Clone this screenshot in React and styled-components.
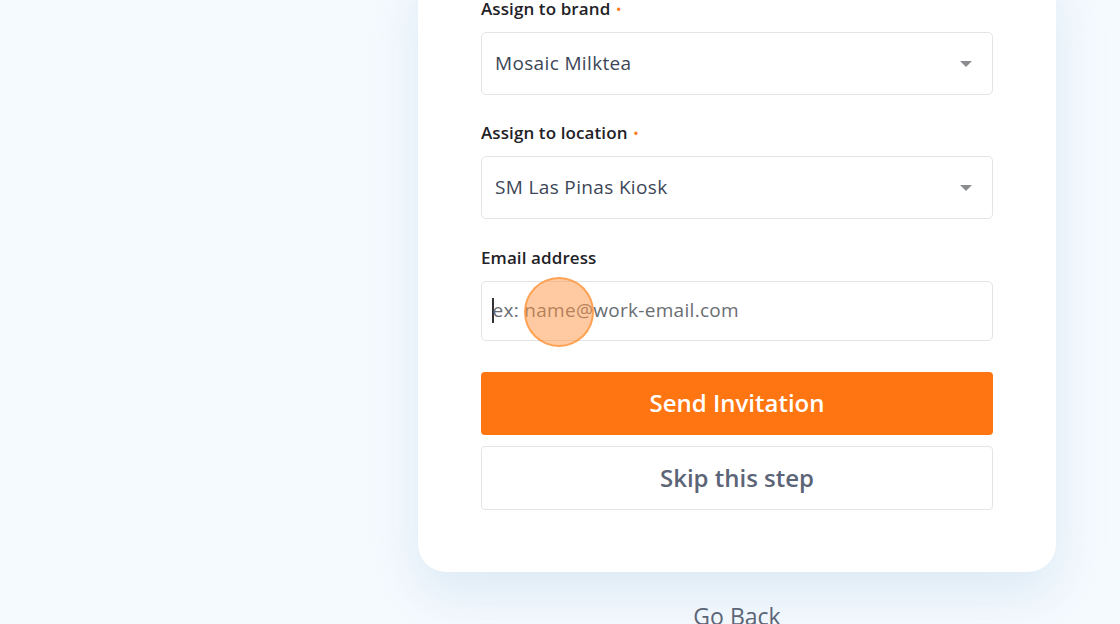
import React from "react";
import styled, { createGlobalStyle } from "styled-components";

const Global = createGlobalStyle`
  html, body { margin: 0; padding: 0; }
  body {
    background: #f5fafe;
    font-family: "Open Sans", "Noto Sans", sans-serif;
    overflow: hidden;
  }
`;

const Page = styled.div`
  width: 1120px;
  height: 624px;
  overflow: hidden;
  display: flex;
  flex-direction: column;
  align-items: flex-start;
  padding-left: 418px;
  box-sizing: border-box;
  background: #f5fafe;
`;

const Column = styled.div`
  width: 638px;
  display: flex;
  flex-direction: column;
  align-items: center;
`;

const Card = styled.div`
  width: 100%;
  box-sizing: border-box;
  margin-top: -40px;
  padding: 38px 63px 62px;
  background: #ffffff;
  border-radius: 28px;
  box-shadow: 0 22px 50px rgba(190, 214, 234, 0.45);
  display: flex;
  flex-direction: column;
`;

const Field = styled.div`
  display: flex;
  flex-direction: column;
  gap: 12px;
  margin-bottom: ${(p) => p.$after}px;
`;

const Label = styled.div`
  font-size: 17px;
  line-height: 22px;
  font-weight: 600;
  color: #1f2227;
  letter-spacing: 0.1px;
`;

const Dot = styled.span`
  color: #ff7a1a;
  font-size: 13px;
  margin-left: 6px;
  vertical-align: 1px;
`;

const Select = styled.div`
  height: 63px;
  box-sizing: border-box;
  border: 1px solid #e2e4e8;
  border-radius: 5px;
  display: flex;
  align-items: center;
  justify-content: space-between;
  padding: 0 20px 2px 13px;
  font-size: 19px;
  letter-spacing: 0.35px;
  color: #3c4657;
`;

const Caret = styled.span`
  width: 0;
  height: 0;
  border-left: 6px solid transparent;
  border-right: 6px solid transparent;
  border-top: 6px solid #8a8c90;
  margin-top: 2px;
`;

const InputBox = styled.div`
  position: relative;
  height: 60px;
  box-sizing: border-box;
  border: 1px solid #e2e4e8;
  border-radius: 5px;
  display: flex;
  align-items: center;
  padding: 0 10px 2px;
  font-size: 19px;
  letter-spacing: 0.3px;
  color: #6a6d72;
`;

const CaretLine = styled.span`
  width: 1.5px;
  height: 25px;
  background: #333;
`;

const Placeholder = styled.span`
  margin-left: -1px;
`;

const ClickMark = styled.span`
  position: absolute;
  left: 42px;
  top: -5px;
  width: 70px;
  height: 70px;
  border-radius: 50%;
  background: rgba(255, 150, 70, 0.5);
  border: 2px solid rgba(255, 145, 50, 0.7);
  box-sizing: border-box;
`;

const Button = styled.div`
  height: ${(p) => p.$h}px;
  box-sizing: border-box;
  border-radius: 4px;
  display: flex;
  align-items: center;
  justify-content: center;
  font-size: 24px;
  font-weight: 600;
  padding-bottom: 2px;
  margin-bottom: ${(p) => p.$after || 0}px;
  background: ${(p) => (p.$primary ? "#ff7512" : "#ffffff")};
  color: ${(p) => (p.$primary ? "#ffffff" : "#5c6577")};
  border: ${(p) => (p.$primary ? "none" : "1px solid #e2e4e8")};
`;

const BackLink = styled.div`
  margin-top: 28px;
  font-size: 23px;
  color: #5c6577;
  font-weight: 400;
`;

export default function App() {
  return (
    <>
      <Global />
      <Page>
        <Column>
          <Card>
            <Field $after={27}>
              <Label>
                Assign to brand<Dot>•</Dot>
              </Label>
              <Select>
                <span>Mosaic Milktea</span>
                <Caret />
              </Select>
            </Field>
            <Field $after={28}>
              <Label>
                Assign to location<Dot>•</Dot>
              </Label>
              <Select>
                <span>SM Las Pinas Kiosk</span>
                <Caret />
              </Select>
            </Field>
            <Field $after={31}>
              <Label>Email address</Label>
              <InputBox>
                <CaretLine />
                <Placeholder>ex: name@work-email.com</Placeholder>
                <ClickMark />
              </InputBox>
            </Field>
            <Button $primary $h={63} $after={11}>
              Send Invitation
            </Button>
            <Button $h={64}>Skip this step</Button>
          </Card>
          <BackLink>Go Back</BackLink>
        </Column>
      </Page>
    </>
  );
}
